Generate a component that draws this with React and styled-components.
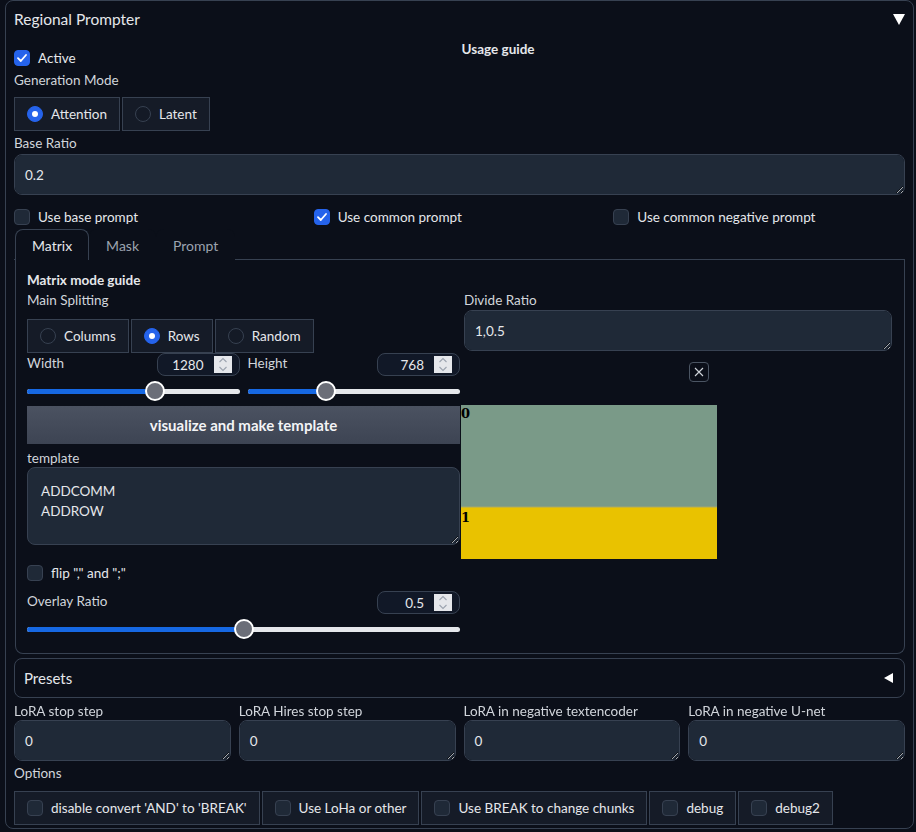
import React from 'react';
import styled, { createGlobalStyle } from 'styled-components';

const GlobalStyle = createGlobalStyle`
  html, body {
    margin: 0;
    background: #0b0f19;
    color: #e5e7eb;
    font-family: Lato, "Open Sans", sans-serif;
    font-size: 13.5px;
  }
  * { box-sizing: border-box; }
`;

function CheckIcon() {
  return (
    <svg width="10" height="8" viewBox="0 0 10 8">
      <path d="M1 4.2 L3.8 7 L9 1" fill="none" stroke="#fff" strokeWidth="1.8" strokeLinecap="round" strokeLinejoin="round" />
    </svg>
  );
}

function Checkbox({ checked, children }) {
  return (
    <CheckRow>
      <Box $checked={checked}>{checked && <CheckIcon />}</Box>
      <span>{children}</span>
    </CheckRow>
  );
}

function RadioGroup({ options, value }) {
  return (
    <Group>
      {options.map((o) => (
        <Choice key={o}>
          <Dot $on={o === value} />
          {o}
        </Choice>
      ))}
    </Group>
  );
}

function NumberBox({ value, width }) {
  return (
    <NumWrap style={{ width }}>
      <NumValue>{value}</NumValue>
      <Spinner>
        <svg width="10" height="15" viewBox="0 0 10 15">
          <path d="M1.5 5 L5 1.5 L8.5 5" fill="none" stroke="#9ca3af" strokeWidth="1.1" />
          <path d="M1.5 10 L5 13.5 L8.5 10" fill="none" stroke="#9ca3af" strokeWidth="1.1" />
        </svg>
      </Spinner>
    </NumWrap>
  );
}

function Slider({ pct }) {
  return (
    <SliderWrap>
      <Track>
        <Fill style={{ width: `${pct}%` }} />
      </Track>
      <Thumb style={{ left: `calc(${pct}% - 10px)` }} />
    </SliderWrap>
  );
}

function NumSlider({ label, value, pct, inputWidth }) {
  return (
    <div>
      <NumHead>
        <Label>{label}</Label>
        <NumberBox value={value} width={inputWidth} />
      </NumHead>
      <Slider pct={pct} />
    </div>
  );
}

export default function App() {
  return (
    <Page>
      <GlobalStyle />
      <Panel>
        <Header>
          <span>Regional Prompter</span>
          <svg width="12" height="11" viewBox="0 0 12 11">
            <polygon points="0,0 12,0 6,11" fill="#fff" />
          </svg>
        </Header>

        <TopRow>
          <ActiveCell>
            <Checkbox checked>Active</Checkbox>
          </ActiveCell>
          <Guide>Usage guide</Guide>
        </TopRow>

        <Label $mt={2}>Generation Mode</Label>
        <GroupSpace $mt={7}>
          <RadioGroup options={['Attention', 'Latent']} value="Attention" />
        </GroupSpace>

        <Label $mt={2}>Base Ratio</Label>
        <Field defaultValue="0.2" rows={1} $mt={1} />

        <ThreeCol>
          <Checkbox>Use base prompt</Checkbox>
          <Checkbox checked>Use common prompt</Checkbox>
          <Checkbox>Use common negative prompt</Checkbox>
        </ThreeCol>

        <TabBar>
          <Tab $active>Matrix</Tab>
          <Tab>Mask</Tab>
          <Tab>Prompt</Tab>
        </TabBar>
        <TabPanel>
          <MatrixGrid>
            <LeftCol>
              <Guide>Matrix mode guide</Guide>
              <Label>Main Splitting</Label>
              <GroupSpace $mt={9}>
                <RadioGroup options={['Columns', 'Rows', 'Random']} value="Rows" />
              </GroupSpace>
              <SizeRow>
                <NumSlider label="Width" value="1280" pct={60.4} inputWidth={83} />
                <NumSlider label="Height" value="768" pct={36.8} inputWidth={83} />
              </SizeRow>
              <BigButton>visualize and make template</BigButton>
              <Label $mt={5} $lh={18}>template</Label>
              <Field defaultValue={'ADDCOMM\nADDROW'} rows={3} $h={78} $pad="13px 13px" />
              <FlipRow>
                <Checkbox>flip &quot;,&quot; and &quot;;&quot;</Checkbox>
              </FlipRow>
              <OverlayRow>
                <NumSlider label="Overlay Ratio" value="0.5" pct={50} inputWidth={83} />
              </OverlayRow>
            </LeftCol>
            <RightCol>
              <DivideBlock>
                <Label>Divide Ratio</Label>
                <Field defaultValue="1,0.5" rows={1} />
              </DivideBlock>
              <Preview>
                <CloseBtn>
                  <svg width="10" height="10" viewBox="0 0 10 10">
                    <path d="M1 1 L9 9 M9 1 L1 9" stroke="#d1d5db" strokeWidth="1.1" />
                  </svg>
                </CloseBtn>
                <svg width="256" height="154" viewBox="0 0 256 154">
                  <rect x="0" y="0" width="256" height="102" fill="#7a9a88" />
                  <rect x="0" y="102" width="256" height="52" fill="#e9c200" />
                  <line x1="0" y1="102" x2="256" y2="102" stroke="#a9a96a" strokeWidth="1" />
                  <text x="0" y="13" fontFamily="'DejaVu Serif', serif" fontWeight="bold" fontSize="13" fill="#000">0</text>
                  <text x="0" y="117" fontFamily="'DejaVu Serif', serif" fontWeight="bold" fontSize="13" fill="#000">1</text>
                </svg>
              </Preview>
            </RightCol>
          </MatrixGrid>
        </TabPanel>

        <Accordion>
          <span>Presets</span>
          <svg width="9" height="10" viewBox="0 0 9 10">
            <polygon points="9,0 9,10 0,5" fill="#fff" />
          </svg>
        </Accordion>

        <FourCol>
          {['LoRA stop step', 'LoRA Hires stop step', 'LoRA in negative textencoder', 'LoRA in negative U-net'].map((l) => (
            <div key={l}>
              <Label $lh={18}>{l}</Label>
              <Field defaultValue="0" rows={1} />
            </div>
          ))}
        </FourCol>

        <Label $mt={2}>Options</Label>
        <GroupSpace $mt={8}>
          <Group>
            {["disable convert 'AND' to 'BREAK'", 'Use LoHa or other', 'Use BREAK to change chunks', 'debug', 'debug2'].map((o) => (
              <Choice key={o}>
                <Box />
                {o}
              </Choice>
            ))}
          </Group>
        </GroupSpace>
      </Panel>
    </Page>
  );
}

const Page = styled.div`
  padding: 0 2px 0 5px;
`;

const Panel = styled.div`
  border: 1px solid #374151;
  border-radius: 8px;
  padding: 0 8px 3px 8px;
  display: flex;
  flex-direction: column;
`;

const Header = styled.div`
  height: 36px;
  display: flex;
  align-items: center;
  justify-content: space-between;
  font-size: 15.5px;
  color: #e5e7eb;
`;

const TopRow = styled.div`
  display: grid;
  grid-template-columns: 1fr 1fr;
  gap: 4px;
  margin-top: 2px;
`;

const ActiveCell = styled.div`
  padding-top: 9px;
`;

const Guide = styled.div`
  font-weight: 700;
  font-size: 13.5px;
  line-height: 20px;
  color: #e5e7eb;
`;

const Label = styled.div`
  font-size: 13.5px;
  line-height: ${(p) => p.$lh || 20}px;
  margin-top: ${(p) => p.$mt || 0}px;
  color: #d1d5db;
  white-space: nowrap;
`;

const CheckRow = styled.label`
  display: flex;
  align-items: center;
  gap: 8px;
  height: 20px;
  font-size: 13.5px;
  color: #e5e7eb;
`;

const Box = styled.span`
  width: 16px;
  height: 16px;
  flex: none;
  border-radius: 4px;
  display: flex;
  align-items: center;
  justify-content: center;
  background: ${(p) => (p.$checked ? '#2563eb' : '#1f2937')};
  border: 1px solid ${(p) => (p.$checked ? '#2563eb' : '#374151')};
`;

const GroupSpace = styled.div`
  margin-top: ${(p) => p.$mt || 0}px;
`;

const Group = styled.div`
  display: flex;
  gap: 2px;
`;

const Choice = styled.label`
  display: flex;
  align-items: center;
  gap: 8px;
  height: 34px;
  padding: 0 12px;
  border: 1px solid #374151;
  background: #151b27;
  font-size: 13.5px;
  color: #e5e7eb;
  white-space: nowrap;
`;

const Dot = styled.span`
  width: 16px;
  height: 16px;
  border-radius: 50%;
  flex: none;
  background: ${(p) => (p.$on ? '#2563eb' : '#141a26')};
  border: 1px solid ${(p) => (p.$on ? '#2563eb' : '#374151')};
  position: relative;
  &::after {
    content: '';
    display: ${(p) => (p.$on ? 'block' : 'none')};
    position: absolute;
    left: 4px;
    top: 4px;
    width: 6px;
    height: 6px;
    border-radius: 50%;
    background: #fff;
  }
`;

const Field = styled.textarea`
  display: block;
  width: 100%;
  height: ${(p) => p.$h || 41}px;
  margin-top: ${(p) => p.$mt || 0}px;
  padding: ${(p) => p.$pad || '10px 10px'};
  background: #1f2937;
  border: 1px solid #374151;
  border-radius: 8px;
  color: #e5e7eb;
  font-family: Lato, "Open Sans", sans-serif;
  font-size: 13.5px;
  line-height: 20px;
  resize: vertical;
  outline: none;
`;

const ThreeCol = styled.div`
  display: grid;
  grid-template-columns: repeat(3, 1fr);
  gap: 8px;
  margin-top: 12px;
`;

const TabBar = styled.div`
  display: flex;
  margin-top: 2px;
  border-bottom: 1px solid #374151;
  height: 31px;
  padding-left: 1px;
`;

const Tab = styled.div`
  height: 31px;
  padding: 0 16px;
  display: flex;
  align-items: center;
  font-size: 14px;
  color: ${(p) => (p.$active ? '#e5e7eb' : '#9ca3af')};
  border: 1px solid ${(p) => (p.$active ? '#374151' : 'transparent')};
  border-bottom: none;
  border-radius: 8px 8px 0 0;
  background: #0b0f19;
  margin-bottom: -1px;
`;

const TabPanel = styled.div`
  border: 1px solid #374151;
  border-top: none;
  border-radius: 0 0 8px 8px;
  margin-left: 1px;
  padding: 10px 12px 14px 11px;
`;

const MatrixGrid = styled.div`
  display: grid;
  grid-template-columns: 433px 1fr;
  gap: 1px;
`;

const LeftCol = styled.div`
  display: flex;
  flex-direction: column;
`;

const RightCol = styled.div`
  display: flex;
  flex-direction: column;
`;

const SizeRow = styled.div`
  display: grid;
  grid-template-columns: 1fr 1fr;
  gap: 8px;
`;

const NumHead = styled.div`
  display: flex;
  justify-content: space-between;
  align-items: flex-start;
  height: 23px;
`;

const NumWrap = styled.div`
  height: 23px;
  border: 1px solid #374151;
  border-radius: 8px;
  background: #111827;
  display: flex;
  align-items: center;
  justify-content: flex-end;
  padding-right: 7px;
  gap: 10px;
`;

const NumValue = styled.span`
  font-size: 13.5px;
  color: #e5e7eb;
`;

const Spinner = styled.span`
  width: 18px;
  height: 17px;
  background: #e5e7eb;
  display: flex;
  align-items: center;
  justify-content: center;
`;

const SliderWrap = styled.div`
  position: relative;
  height: 20px;
  margin-top: 5px;
  display: flex;
  align-items: center;
`;

const Track = styled.div`
  width: 100%;
  height: 5px;
  border-radius: 3px;
  background: #e5e7eb;
  overflow: hidden;
`;

const Fill = styled.div`
  height: 100%;
  background: #1668e3;
`;

const Thumb = styled.div`
  position: absolute;
  top: 0;
  width: 20px;
  height: 20px;
  border-radius: 50%;
  background: #6b6e78;
  border: 2px solid #fff;
`;

const BigButton = styled.div`
  height: 38px;
  margin-top: 5px;
  display: flex;
  align-items: center;
  justify-content: center;
  background: linear-gradient(#4b5261, #3d4453);
  font-weight: 700;
  font-size: 15px;
  color: #f3f4f6;
`;

const FlipRow = styled.div`
  margin-top: 18px;
`;

const OverlayRow = styled.div`
  margin-top: 8px;
`;

const DivideBlock = styled.div`
  padding-left: 3px;
  margin-top: 20px;
`;

const Preview = styled.div`
  width: 256px;
  margin-top: 11px;
  display: flex;
  flex-direction: column;
  align-items: flex-end;
  gap: 23px;
  svg { display: block; }
`;

const CloseBtn = styled.div`
  width: 20px;
  height: 20px;
  margin-right: 8px;
  border: 1px solid #4b5563;
  border-radius: 4px;
  display: flex;
  align-items: center;
  justify-content: center;
`;

const Accordion = styled.div`
  margin-top: 4px;
  height: 40px;
  border: 1px solid #374151;
  border-radius: 8px;
  padding: 0 11px 0 9px;
  display: flex;
  align-items: center;
  justify-content: space-between;
  font-size: 15px;
  color: #e5e7eb;
`;

const FourCol = styled.div`
  display: grid;
  grid-template-columns: repeat(4, 1fr);
  gap: 8px;
  margin-top: 4px;
`;
